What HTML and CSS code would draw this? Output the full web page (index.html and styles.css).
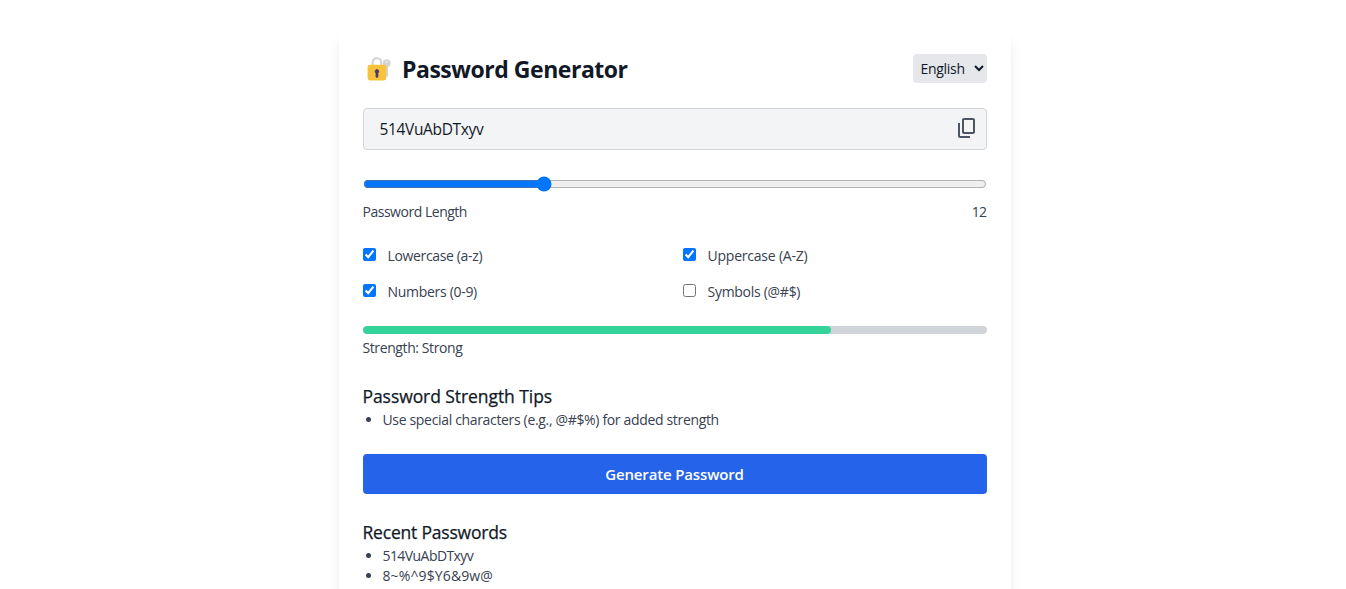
FILE: index.html
```html
<!DOCTYPE html>
<html lang="en">
<head>
<meta charset="utf-8">
<title>Password Generator</title>
<link rel="stylesheet" href="styles.css">
</head>
<body>
<main class="card">
  <header class="header">
    <h1 class="title">
      <svg class="lock" viewBox="0 0 32 32" aria-hidden="true">
        <path d="M26.500 11v14" stroke="#d3d3d3" stroke-width="3.500"/>
        <circle cx="26.500" cy="8" r="5" fill="#d3d3d3"/>
        <circle cx="26.500" cy="6" r="1.2" fill="#f4f4f4"/>
        <path d="M8.500 11V6.500a5.500 5 0 0 1 11 0V11" fill="none" stroke="#d3d3d3" stroke-width="2.600"/>
        <rect x="2" y="10" width="24" height="20" rx="3" fill="#f9c23c"/>
        <path d="M14 16a2.500 2.500 0 0 0-1.200 4.600V25a1.200 1.200 0 0 0 2.400 0v-4.400A2.500 2.500 0 0 0 14 16" fill="#433b6b" stroke="#433b6b"/>
      </svg>
      <span>Password Generator</span>
    </h1>
    <select class="language" aria-label="Language"><option>English</option></select>
  </header>
  <div class="field">
    <span class="password">514VuAbDTxyv</span>
    <button class="copy" aria-label="Copy password">
      <svg viewBox="0 0 24 24" width="24" height="24" fill="#4b5563"><path d="M18 2H9c-1.100 0-2 .9-2 2v12c0 1.100.9 2 2 2h9c1.100 0 2-.9 2-2V4c0-1.100-.9-2-2-2zm0 14H9V4h9v12zM3 15V7h2v13h10v2H5c-1.100 0-2-.9-2-2v-5z"/></svg>
    </button>
  </div>
  <input class="slider" type="range" min="4" max="32" value="12" aria-label="Password length">
  <div class="length"><span class="length-label">Password Length</span><span class="count">12</span></div>
  <div class="options">
    <label class="option"><input type="checkbox" checked><span class="lower">Lowercase (a-z)</span></label>
    <label class="option"><input type="checkbox" checked><span class="upper">Uppercase (A-Z)</span></label>
    <label class="option"><input type="checkbox" checked><span class="numbers">Numbers (0-9)</span></label>
    <label class="option"><input type="checkbox"><span class="symbols">Symbols (@#$)</span></label>
  </div>
  <div class="meter"><div class="meter-fill" style="width:75%"></div></div>
  <p class="strength">Strength: Strong</p>
  <h2 class="heading">Password Strength Tips</h2>
  <ul class="list"><li><span class="tip">Use special characters (e.g., @#$%) for added strength</span></li></ul>
  <button class="generate">Generate Password</button>
  <h2 class="heading recent-title">Recent Passwords</h2>
  <ul class="list"><li><span class="recent-a">514VuAbDTxyv</span></li><li><span class="recent-b">8~%^9$Y6&amp;9w@</span></li></ul>
</main>
</body>
</html>
```
FILE: styles.css
```css
* { box-sizing: border-box; }
html, body { height: 100%; overflow: hidden; }
body {
  margin: 0;
  padding-top: 29px;
  background: #fff;
  color: #374151;
  font: 14px/20px "Open Sans", "Noto Sans", sans-serif;
  letter-spacing: -0.1px;
}
h1, h2, p, ul { margin: 0; padding: 0; }
button, select { font-family: inherit; border: 0; }
.card {
  width: 672px;
  margin-left: 338.5px;
  padding: 24px;
  border-radius: 8px;
  background: #fff;
  box-shadow: 0 10px 15px -3px rgba(0,0,0,.1), 0 4px 6px -4px rgba(0,0,0,.1);
}
.header { display: flex; justify-content: space-between; align-items: center; height: 32px; margin-bottom: 23px; }
.title { display: flex; align-items: center; gap: 11px; color: #111827; font-size: 23px; line-height: 32px; letter-spacing: -0.47px; }
.lock { width: 25px; height: 25px; margin-left: 3.5px; }
.language { width: 74px; height: 29px; margin-bottom: 2px; padding: 4px; border-radius: 4px; background: #e5e7eb; color: #111827; font-size: 14px; letter-spacing: -0.3px; }
.field { display: flex; align-items: center; justify-content: space-between; height: 42px; padding: 0 8px 0 16px; border: 1px solid #d1d5db; border-radius: 4px; background: #f3f4f6; }
.password { color: #111827; font-size: 15.5px; letter-spacing: -0.35px; }
.copy { display: flex; margin: 0 -1px 2px 0; padding: 0; background: none; }
.slider { display: block; width: 100%; height: 16px; margin: 26px 0 10px; accent-color: #0075ff; }
.length { display: flex; justify-content: space-between; }
.length-label { letter-spacing: -0.48px; }
.count { letter-spacing: -0.6px; }
.options { display: grid; grid-template-columns: 1fr 1fr; gap: 16px; margin-top: 24px; }
.option { display: flex; height: 20px; }
.option input { width: 13px; height: 13px; margin: 2px 12px 0 0; }
.lower { letter-spacing: -0.35px; }
.upper { letter-spacing: -0.22px; }
.numbers { letter-spacing: -0.3px; }
.symbols { letter-spacing: -0.28px; }
.meter { height: 8px; margin-top: 24px; border-radius: 4px; background: #d1d5db; overflow: hidden; }
.meter-fill { height: 100%; background: #34d399; border-radius: 4px; }
.strength { margin: 4px 0 24px; letter-spacing: -0.4px; }
.heading { height: 28px; color: #111827; font-size: 17.5px; font-weight: 500; line-height: 28px; letter-spacing: -0.07px; -webkit-text-stroke: 0.25px #111827; }
.list { padding-left: 20px; }
.tip { letter-spacing: -0.335px; }
.recent-title { letter-spacing: -0.2px; }
.recent-a { letter-spacing: -0.57px; }
.recent-b { letter-spacing: 0.12px; }
.generate { display: block; width: 100%; height: 40px; margin: 24px 0; border-radius: 4px; background: #2563eb; color: #fff; font-size: 15px; font-weight: 600; letter-spacing: -0.15px; }
```
